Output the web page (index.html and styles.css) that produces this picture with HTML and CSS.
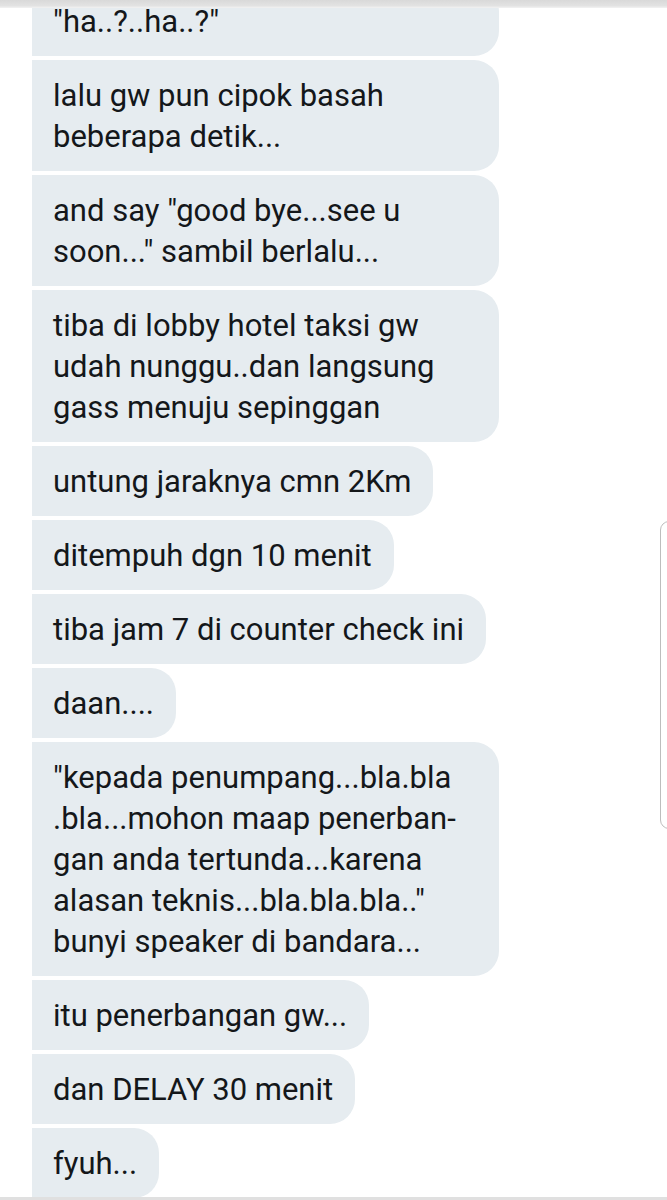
FILE: index.html
```html
<!DOCTYPE html>
<html lang="id">
<head>
<meta charset="utf-8">
<title>Chat</title>
<link rel="stylesheet" href="styles.css">
</head>
<body>
<div class="screen">
  <div class="topbar"></div>
  <div class="messages">
    <div class="bubble wide">"ha..?..ha..?"</div>
    <div class="bubble wide">lalu gw pun cipok basah<br>beberapa detik...</div>
    <div class="bubble wide">and say "good bye...see u<br>soon..." sambil berlalu...</div>
    <div class="bubble wide">tiba di lobby hotel taksi gw<br>udah nunggu..dan langsung<br>gass menuju sepinggan</div>
    <div class="bubble">untung jaraknya cmn 2Km</div>
    <div class="bubble">ditempuh dgn 10 menit</div>
    <div class="bubble">tiba jam 7 di counter check ini</div>
    <div class="bubble">daan....</div>
    <div class="bubble wide">"kepada penumpang...bla.bla<br>.bla...mohon maap penerban-<br>gan anda tertunda...karena<br>alasan teknis...bla.bla.bla.."<br>bunyi speaker di bandara...</div>
    <div class="bubble">itu penerbangan gw...</div>
    <div class="bubble">dan DELAY 30 menit</div>
    <div class="bubble">fyuh...</div>
  </div>
  <div class="scrollhandle"></div>
  <div class="bottombar"></div>
</div>
</body>
</html>
```
FILE: styles.css
```css
* { box-sizing: border-box; }
html, body {
  margin: 0;
  padding: 0;
  background: #ffffff;
}
.screen {
  position: relative;
  width: 667px;
  height: 1200px;
  overflow: hidden;
  background: #ffffff;
  font-family: Roboto, "Noto Sans", sans-serif;
}
.topbar {
  position: absolute;
  left: 0;
  top: 0;
  width: 100%;
  height: 8px;
  background: linear-gradient(#d9d9d9, #e2e2e2 70%, #f2f2f2);
  z-index: 2;
}
.messages {
  display: flex;
  flex-direction: column;
  align-items: flex-start;
  gap: 4px;
  margin-top: -14px;
  padding-left: 32px;
}
.bubble {
  background: #e6ecf0;
  color: #14171a;
  font-size: 31px;
  line-height: 41px;
  padding: 15px 22px 14px 21px;
  border-radius: 0 25px 25px 0;
  white-space: nowrap;
}
.bubble.wide {
  width: 467px;
}
.scrollhandle {
  position: absolute;
  left: 660px;
  top: 521px;
  width: 24px;
  height: 308px;
  border: 1.5px solid #bdbdbd;
  border-radius: 9px;
}
.bottombar {
  position: absolute;
  left: 0;
  bottom: 0;
  width: 100%;
  height: 3px;
  background: #e0e0e0;
}
```
